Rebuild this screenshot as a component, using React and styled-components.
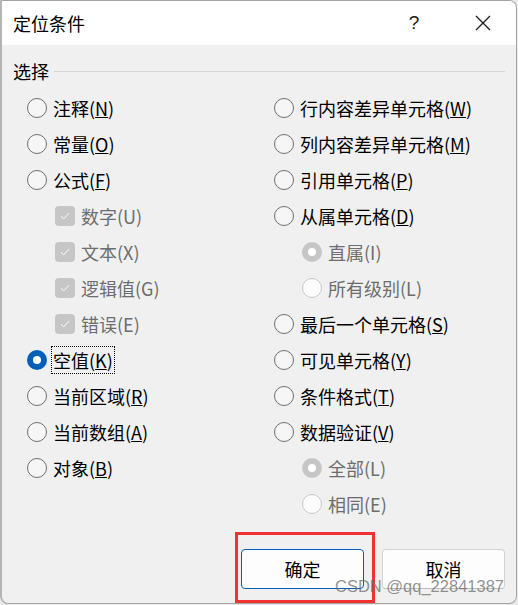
import React from 'react';
import styled, { createGlobalStyle } from 'styled-components';

const GlobalStyle = createGlobalStyle`
  body {
    margin: 0;
    background: #e9e9e9;
    font-family: "Noto Sans CJK SC", "Noto Sans", sans-serif;
  }
`;

const Dialog = styled.div`
  position: relative;
  width: 514px;
  height: 602px;
  background: #f0f0f0;
  border: 1px solid #a4a4a4;
  border-left: 2px solid #b4b4b4;
  border-radius: 0 8px 8px 8px;
  overflow: hidden;
  display: flex;
  flex-direction: column;
  color: #000;
`;

const TitleBar = styled.div`
  height: 44px;
  background: #fff;
  display: flex;
  align-items: center;
  padding-left: 11px;
  flex-shrink: 0;
`;

const Title = styled.div`
  font-size: 18px;
  flex: 1;
  line-height: 1;
`;

const TitleButton = styled.div`
  width: ${(p) => p.w}px;
  display: flex;
  align-items: center;
  justify-content: center;
  font-size: 19px;
  font-family: "Liberation Sans", sans-serif;
  color: #1a1a1a;
`;

const Body = styled.div`
  flex: 1;
  padding: 10px 11px 0 11px;
  display: flex;
  flex-direction: column;
`;

const Legend = styled.div`
  display: flex;
  align-items: center;
  gap: 5px;
  height: 32px;
  font-size: 18px;
  padding-bottom: 3px;
  &::after {
    content: '';
    flex: 1;
    height: 1px;
    background: #d6d6d6;
  }
`;

const Columns = styled.div`
  display: grid;
  grid-template-columns: 247px 1fr;
  padding-left: 14px;
`;

const Column = styled.div`
  display: flex;
  flex-direction: column;
`;

const Row = styled.div`
  height: 36px;
  display: flex;
  align-items: center;
  gap: 6px;
  padding-left: ${(p) => (p.indent ? 28 : 0)}px;
  font-size: 18px;
  color: ${(p) => (p.disabled ? '#6d6d6d' : '#000')};
`;

const RadioCircle = styled.span`
  box-sizing: border-box;
  width: 20px;
  height: 20px;
  border-radius: 50%;
  flex-shrink: 0;
  display: flex;
  align-items: center;
  justify-content: center;
  ${(p) =>
    p.checked && !p.disabled
      ? 'background: #005fb8; border: none;'
      : p.checked && p.disabled
      ? 'background: #c6c6c6; border: none;'
      : p.disabled
      ? 'background: #fbfbfb; border: 1px solid #c8c8c8;'
      : 'background: #f6f6f6; border: 1px solid #6f6f6f;'}
  &::after {
    content: '';
    display: ${(p) => (p.checked ? 'block' : 'none')};
    width: 8px;
    height: 8px;
    border-radius: 50%;
    background: #fff;
  }
`;

const CheckBox = styled.span`
  width: 20px;
  height: 20px;
  border-radius: 4px;
  background: #c6c6c6;
  flex-shrink: 0;
  display: flex;
  align-items: center;
  justify-content: center;
`;

const Label = styled.span`
  line-height: 1;
  padding: 4px 1px 4px 1px;
  margin-left: -2px;
  border: 1px ${(p) => (p.focused ? 'dotted #000' : 'solid transparent')};
  white-space: nowrap;
`;

const Footer = styled.div`
  display: flex;
  justify-content: flex-end;
  gap: 18px;
  margin-top: 27px;
`;

const Button = styled.button`
  box-sizing: border-box;
  width: 123px;
  height: 40px;
  background: #fdfdfd;
  border: 1px solid ${(p) => (p.primary ? '#005fb8' : '#d2d2d2')};
  border-bottom-color: ${(p) => (p.primary ? '#005fb8' : '#bcbcbc')};
  border-radius: 4px;
  font-family: "Noto Sans CJK SC", sans-serif;
  font-size: 18px;
  color: #000;
  padding: 0;
`;

const Highlight = styled.div`
  position: absolute;
  left: 233px;
  top: 531px;
  width: 134px;
  height: 65px;
  border: 3px solid #f23232;
  pointer-events: none;
`;

const Watermark = styled.div`
  position: absolute;
  left: 333px;
  top: 576px;
  font-family: "Liberation Sans", Arial, sans-serif;
  font-size: 16.5px;
  color: rgba(110, 110, 110, 0.75);
  white-space: nowrap;
  pointer-events: none;
`;

const left = [
  { kind: 'radio', text: '注释', key: 'N' },
  { kind: 'radio', text: '常量', key: 'O' },
  { kind: 'radio', text: '公式', key: 'F' },
  { kind: 'check', text: '数字', key: 'U', indent: true, disabled: true },
  { kind: 'check', text: '文本', key: 'X', indent: true, disabled: true },
  { kind: 'check', text: '逻辑值', key: 'G', indent: true, disabled: true },
  { kind: 'check', text: '错误', key: 'E', indent: true, disabled: true },
  { kind: 'radio', text: '空值', key: 'K', checked: true, focused: true },
  { kind: 'radio', text: '当前区域', key: 'R' },
  { kind: 'radio', text: '当前数组', key: 'A' },
  { kind: 'radio', text: '对象', key: 'B' },
];

const right = [
  { kind: 'radio', text: '行内容差异单元格', key: 'W' },
  { kind: 'radio', text: '列内容差异单元格', key: 'M' },
  { kind: 'radio', text: '引用单元格', key: 'P' },
  { kind: 'radio', text: '从属单元格', key: 'D' },
  { kind: 'radio', text: '直属', key: 'I', indent: true, disabled: true, checked: true },
  { kind: 'radio', text: '所有级别', key: 'L', indent: true, disabled: true },
  { kind: 'radio', text: '最后一个单元格', key: 'S' },
  { kind: 'radio', text: '可见单元格', key: 'Y' },
  { kind: 'radio', text: '条件格式', key: 'T' },
  { kind: 'radio', text: '数据验证', key: 'V' },
  { kind: 'radio', text: '全部', key: 'L', indent: true, disabled: true, checked: true },
  { kind: 'radio', text: '相同', key: 'E', indent: true, disabled: true },
];

function Check() {
  return (
    <svg width="10" height="8" viewBox="0 0 10 8">
      <path d="M1 4.2 L3.7 6.8 L9 1.2" fill="none" stroke="#fff" strokeWidth="1" />
    </svg>
  );
}

function Option({ item }) {
  return (
    <Row indent={item.indent} disabled={item.disabled}>
      {item.kind === 'check' ? (
        <CheckBox>
          <Check />
        </CheckBox>
      ) : (
        <RadioCircle checked={item.checked} disabled={item.disabled} />
      )}
      <Label focused={item.focused}>
        {item.text}(
        {item.disabled ? item.key : <u>{item.key}</u>})
      </Label>
    </Row>
  );
}

export default function App() {
  return (
    <>
      <GlobalStyle />
      <Dialog>
        <TitleBar>
          <Title>定位条件</Title>
          <TitleButton w={72}>?</TitleButton>
          <TitleButton w={66}>
            <svg width="16" height="16" viewBox="0 0 16 16">
              <path d="M1 1 L15 15 M15 1 L1 15" stroke="#1a1a1a" strokeWidth="1.3" />
            </svg>
          </TitleButton>
        </TitleBar>
        <Body>
          <Legend>选择</Legend>
          <Columns>
            <Column>
              {left.map((it, i) => (
                <Option key={i} item={it} />
              ))}
            </Column>
            <Column>
              {right.map((it, i) => (
                <Option key={i} item={it} />
              ))}
            </Column>
          </Columns>
          <Footer>
            <Button primary>确定</Button>
            <Button>取消</Button>
          </Footer>
        </Body>
        <Highlight />
        <Watermark>CSDN @qq_22841387</Watermark>
      </Dialog>
    </>
  );
}
